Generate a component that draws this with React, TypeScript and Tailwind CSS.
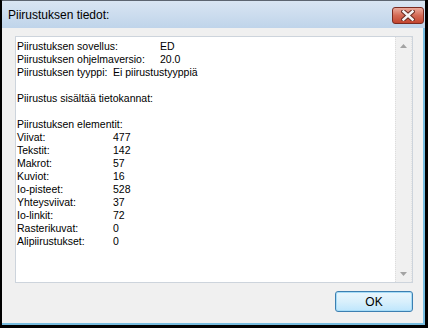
import React from "react";

const general = [
  { label: "Piirustuksen sovellus:", value: "ED", w: "w-[143px]" },
  { label: "Piirustuksen ohjelmaversio:", value: "20.0", w: "w-[143px]" },
  { label: "Piirustuksen tyyppi:", value: "Ei piirustustyyppiä", w: "w-[96px]" },
];

const elements = [
  ["Viivat:", "477"],
  ["Tekstit:", "142"],
  ["Makrot:", "57"],
  ["Kuviot:", "16"],
  ["Io-pisteet:", "528"],
  ["Yhteysviivat:", "37"],
  ["Io-linkit:", "72"],
  ["Rasterikuvat:", "0"],
  ["Alipiirustukset:", "0"],
];

function CloseButton() {
  return (
    <div className="absolute left-[390px] top-[6px] w-[32px] h-[17px] rounded-[3px] border border-[#7a2a20] bg-gradient-to-b from-[#eaaa9c] via-[#d46a55] to-[#c2442e] flex items-center justify-center">
      <svg width="14" height="11" viewBox="0 0 14 11">
        <path d="M2.5 1.5 L11.5 9.5 M11.5 1.5 L2.5 9.5" stroke="#6a2a20" strokeWidth="4.5" strokeLinecap="square" />
        <path d="M2.5 1.5 L11.5 9.5 M11.5 1.5 L2.5 9.5" stroke="#f4f4f4" strokeWidth="2.5" strokeLinecap="square" />
      </svg>
    </div>
  );
}

function ScrollArrow({ down }: { down?: boolean }) {
  return (
    <div className="h-[17px] flex items-center justify-center">
      <svg width="7" height="4" viewBox="0 0 7 4">
        <path d={down ? "M0 0 L7 0 L3.5 4 Z" : "M3.5 0 L7 4 L0 4 Z"} fill="#a3a3a3" />
      </svg>
    </div>
  );
}

export default function App() {
  return (
    <div className="w-[428px] h-[328px] bg-black overflow-hidden font-['Liberation_Sans',Arial,sans-serif]">
      <div className="relative w-[425px] h-[325px] flex flex-col border-t border-l-2 border-t-[#5d6570] border-l-black rounded-tl-[4px] bg-[#f0f0f0]">
        {/* title bar */}
        <div className="h-[27px] shrink-0 bg-gradient-to-b from-[#d9e5f2] to-[#bfd4ea] flex items-center pl-[6px]">
          <span className="text-[12px] text-black leading-none">Piirustuksen tiedot:</span>
        </div>
        <CloseButton />

        {/* client */}
        <div className="flex-1 flex flex-col border-r-2 border-b-2 border-[#78bde0] bg-[#f0f0f0] pl-[13px] pr-[8px] pt-[8px]">
          <div className="w-[398px] h-[247px] bg-white border border-[#cdd4dc] flex">
            <div className="flex-1 pl-[1px] pt-[3px] text-[10.5px] leading-[13px] text-black">
              {general.map((r) => (
                <div key={r.label} className="flex h-[13px] whitespace-nowrap">
                  <span className={`${r.w} shrink-0`}>{r.label}</span>
                  <span>{r.value}</span>
                </div>
              ))}
              <div className="h-[13px]" />
              <div className="h-[13px]">Piirustus sisältää tietokannat:</div>
              <div className="h-[13px]" />
              <div className="h-[13px]">Piirustuksen elementit:</div>
              {elements.map(([l, v]) => (
                <div key={l} className="flex h-[13px] whitespace-nowrap">
                  <span className="w-[96px] shrink-0">{l}</span>
                  <span>{v}</span>
                </div>
              ))}
            </div>
            <div className="w-[17px] flex flex-col justify-between bg-[#f0f0f0] border-l border-dotted border-l-[#dcdcdc] border-r border-r-[#e3e3e3]">
              <ScrollArrow />
              <ScrollArrow down />
            </div>
          </div>
          <div className="flex justify-end pt-[8px] pr-[2px]">
            <button
              type="button"
              className="w-[78px] h-[21px] rounded-[3px] border border-[#3c7fb1] bg-gradient-to-b from-[#eaf6fd] via-[#d9f0fc] to-[#bee6fd] shadow-[inset_0_0_0_1px_#a6dcf7] text-[12px] text-black leading-none"
            >
              OK
            </button>
          </div>
        </div>
      </div>
    </div>
  );
}
